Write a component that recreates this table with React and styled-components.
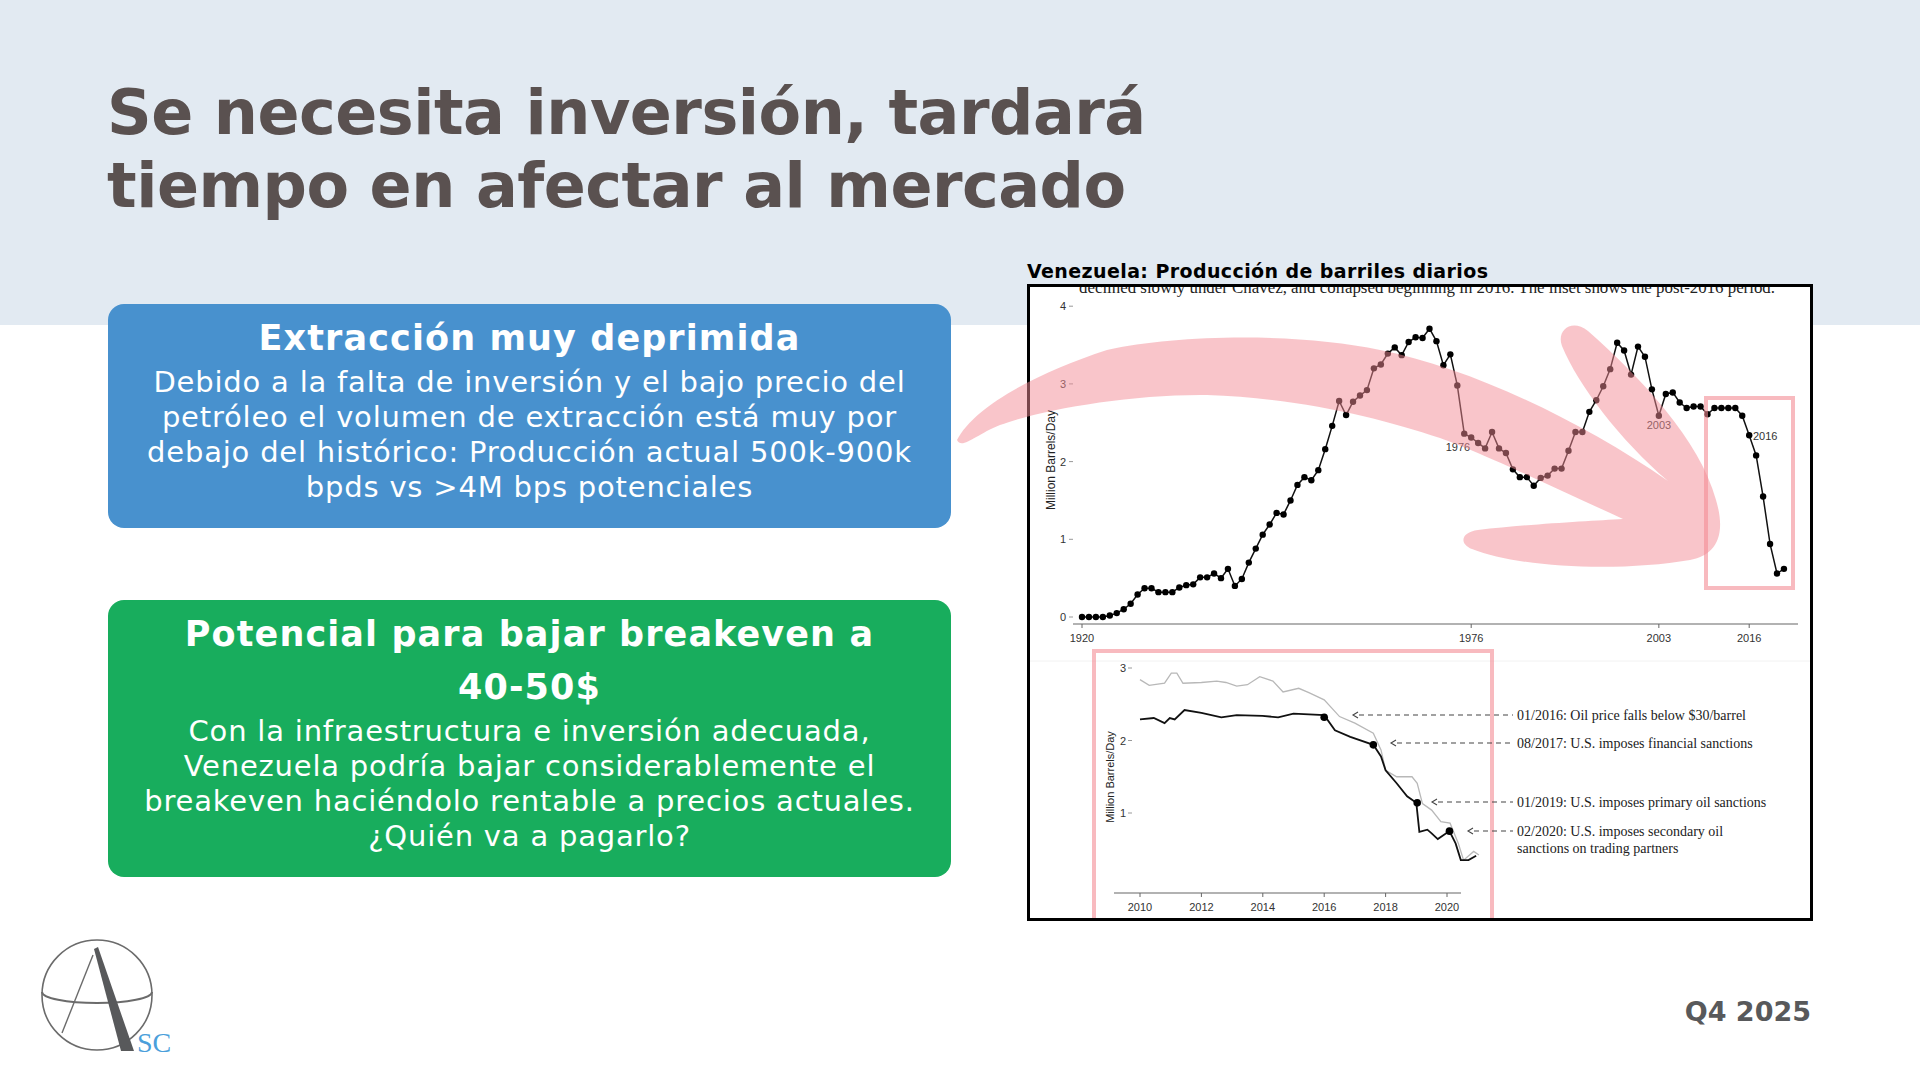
import React from 'react';
import styled, {createGlobalStyle} from 'styled-components';

const GlobalStyle = createGlobalStyle`
  html, body { margin: 0; padding: 0; background: #fff; }
  * { box-sizing: border-box; }
`;

// serie anual 1920-2021 (millones de barriles/dia)
const production = [
  0, 0, 0, 0, 0.02, 0.05, 0.1, 0.17, 0.29, 0.37,
  0.37, 0.32, 0.32, 0.32, 0.38, 0.41, 0.42, 0.51, 0.51, 0.56,
  0.5, 0.62, 0.4, 0.49, 0.7, 0.88, 1.06, 1.19, 1.34, 1.32,
  1.5, 1.7, 1.8, 1.76, 1.89, 2.16, 2.46, 2.78, 2.6, 2.77,
  2.85, 2.92, 3.2, 3.25, 3.39, 3.47, 3.37, 3.54, 3.6, 3.59,
  3.71, 3.55, 3.24, 3.38, 2.98, 2.36, 2.31, 2.24, 2.17, 2.38,
  2.17, 2.11, 1.9, 1.8, 1.8, 1.69, 1.79, 1.82, 1.91, 1.91,
  2.14, 2.38, 2.38, 2.64, 2.79, 2.97, 3.19, 3.53, 3.43, 3.12,
  3.48, 3.35, 2.93, 2.59, 2.87, 2.89, 2.76, 2.69, 2.71, 2.71,
  2.61, 2.69, 2.69, 2.69, 2.69, 2.59, 2.34, 2.08, 1.55, 0.94,
  0.56, 0.62,
];

const insetGray = [
  [2010, 2.84], [2010.3, 2.76], [2010.8, 2.79], [2011.02, 2.93], [2011.2, 2.93],
  [2011.4, 2.79], [2012, 2.8], [2012.5, 2.82], [2012.8, 2.8], [2013.15, 2.75],
  [2013.5, 2.77], [2013.9, 2.88], [2014.33, 2.82], [2014.66, 2.67], [2015.17, 2.72],
  [2015.5, 2.66], [2016, 2.56], [2016.5, 2.33], [2017, 2.24], [2017.6, 2.1],
  [2017.85, 1.87], [2018, 1.59], [2018.36, 1.5], [2018.86, 1.5], [2019.03, 1.41],
  [2019.2, 1.13], [2019.5, 1.04], [2019.8, 0.88], [2020.1, 0.86], [2020.37, 0.58],
  [2020.54, 0.35], [2020.87, 0.47], [2021.04, 0.42],
];

const insetBlack = [
  [2010, 2.29], [2010.45, 2.31], [2010.8, 2.24], [2010.97, 2.31], [2011.13, 2.29],
  [2011.45, 2.42], [2012, 2.38], [2012.65, 2.32], [2013.15, 2.35], [2013.99, 2.34],
  [2014.5, 2.32], [2015, 2.37], [2016, 2.35], [2016.35, 2.14], [2016.85, 2.05],
  [2017.6, 1.94], [2017.85, 1.78], [2018, 1.59], [2018.36, 1.41], [2018.7, 1.23],
  [2019, 1.14], [2019.1, 0.74], [2019.36, 0.77], [2019.5, 0.72], [2019.7, 0.64],
  [2020.08, 0.75], [2020.28, 0.58], [2020.45, 0.35], [2020.7, 0.35], [2020.95, 0.41],
];

const insetDots = [[2016, 2.32], [2017.6, 1.94], [2019.03, 1.14], [2020.08, 0.75]];

const notes = [
  {y: 431, from: 326, lines: ['01/2016: Oil price falls below $30/barrel']},
  {y: 459, from: 364, lines: ['08/2017: U.S. imposes financial sanctions']},
  {y: 518, from: 405, lines: ['01/2019: U.S. imposes primary oil sanctions']},
  {y: 547, from: 441, lines: ['02/2020: U.S. imposes secondary oil', 'sanctions on trading partners']},
];

const mx = year => 55 + (year - 1920) * 6.95;
const my = v => 333 - v * 77.7;
const ix = year => 113 + (year - 2010) * 30.7;
const iy = v => 384 + (3 - v) * 72.5;

const Page = styled.div`
  position: relative;
  width: 1920px;
  height: 1080px;
  overflow: hidden;
  background: linear-gradient(to bottom, #e2eaf2 0, #e2eaf2 325px, #ffffff 325px);
  font-family: "DejaVu Sans", "Open Sans", sans-serif;
`;

const Title = styled.h1`
  margin: 0;
  padding: 76px 0 0 107px;
  font-size: 62px;
  line-height: 73px;
  font-weight: 700;
  color: #5a5150;
  letter-spacing: -0.5px;
`;

const MainRow = styled.div`
  display: grid;
  grid-template-columns: 843px 786px;
  column-gap: 76px;
  margin-top: 36px;
  padding-left: 108px;
`;

const Cards = styled.div`
  display: flex;
  flex-direction: column;
  gap: 72px;
  padding-top: 46px;
`;

const Card = styled.section`
  background: ${p => p.$tone};
  border-radius: 16px;
  padding: 8px 10px 23px;
  color: #fff;
  text-align: center;
`;

const CardTitle = styled.h2`
  margin: 0;
  font-size: 35px;
  line-height: 53px;
  font-weight: 700;
  letter-spacing: 1.1px;
  white-space: nowrap;
`;

const CardBody = styled.p`
  margin: 0;
  font-size: 29px;
  line-height: 35px;
  letter-spacing: 0.8px;
  white-space: nowrap;
`;

const ChartColumn = styled.div`
  display: flex;
  flex-direction: column;
`;

const ChartTitle = styled.h3`
  margin: 0;
  font-size: 19px;
  line-height: 26px;
  font-weight: 700;
  letter-spacing: 0.4px;
  color: #000;
`;

const ChartFrame = styled.div`
  width: 786px;
  height: 637px;
  border: 3px solid #000;
  background: #fff;
  overflow: hidden;
  svg { display: block; }
`;

const Footer = styled.footer`
  display: flex;
  justify-content: space-between;
  align-items: flex-start;
  margin-top: 16px;
  padding: 0 109px 0 40px;
`;

const Period = styled.div`
  padding-top: 60px;
  font-size: 27px;
  line-height: 30px;
  font-weight: 700;
  color: #58595b;
`;

const Overlay = styled.svg`
  position: absolute;
  left: 0;
  top: 0;
  pointer-events: none;
`;

function Logo() {
  return (
    <svg width="150" height="120" viewBox="0 0 150 120">
      <circle cx="57" cy="58" r="55" fill="none" stroke="#6b6b6b" strokeWidth="1.6" />
      <path d="M2 55 A55 11 0 0 0 112 55" fill="none" stroke="#6b6b6b" strokeWidth="2" />
      <line x1="53" y1="18" x2="22" y2="96" stroke="#6b6b6b" strokeWidth="1.4" />
      <polygon points="54,12 58,10 94,114 81,114" fill="#58595b" />
      <text x="97" y="115" fontFamily="'Liberation Serif', serif" fontSize="28" fill="#4b9fdb">SC</text>
    </svg>
  );
}

function MainChart() {
  const pts = production.map((v, i) => `${mx(1920 + i)},${my(v)}`).join(' ');
  return (
    <g>
      <text x="52" y="9" fontFamily="'Liberation Serif', serif" fontSize="17" fill="#222"
        textLength="696" lengthAdjust="spacingAndGlyphs">
        declined slowly under Chávez, and collapsed beginning in 2016. The inset shows the post-2016 period.
      </text>
      <g fontFamily="'Liberation Sans', sans-serif" fontSize="11" fill="#333">
        {[0, 1, 2, 3, 4].map(v => (
          <g key={v}>
            <text x="39" y={my(v) + 4} textAnchor="end">{v}</text>
            <line x1="42" x2="46" y1={my(v)} y2={my(v)} stroke="#999" strokeWidth="1" />
          </g>
        ))}
        <text transform="translate(28 176) rotate(-90)" textAnchor="middle" fontSize="12" fill="#222">
          Million Barrels/Day
        </text>
        <line x1="46" x2="771" y1="340" y2="340" stroke="#666" strokeWidth="1.2" />
        {[1920, 1976, 2003, 2016].map(y => (
          <g key={y}>
            <line x1={mx(y)} x2={mx(y)} y1="340" y2="344" stroke="#666" />
            <text x={mx(y)} y="358" textAnchor="middle">{y}</text>
          </g>
        ))}
        <text x="431" y="167" textAnchor="middle">1976</text>
        <text x="632" y="145" textAnchor="middle">2003</text>
        <text x="726" y="156">2016</text>
      </g>
      <polyline points={pts} fill="none" stroke="#111" strokeWidth="1.5" />
      {production.map((v, i) => (
        <circle key={i} cx={mx(1920 + i)} cy={my(v)} r="3.2" fill="#000" />
      ))}
      <rect x="679" y="114" width="87" height="190" fill="none" stroke="rgba(244,140,148,0.6)" strokeWidth="4" />
      <line x1="3" x2="783" y1="377" y2="377" stroke="#f2f2f2" strokeWidth="1" />
    </g>
  );
}

function InsetChart() {
  const line = arr => arr.map(([y, v]) => `${ix(y)},${iy(v)}`).join(' ');
  return (
    <g>
      <rect x="67" y="367" width="398" height="290" fill="none" stroke="rgba(244,140,148,0.6)" strokeWidth="4" />
      <g fontFamily="'Liberation Sans', sans-serif" fontSize="11" fill="#333">
        {[1, 2, 3].map(v => (
          <g key={v}>
            <text x="99" y={iy(v) + 4} textAnchor="end">{v}</text>
            <line x1="101" x2="105" y1={iy(v)} y2={iy(v)} stroke="#999" />
          </g>
        ))}
        <text transform="translate(87 493) rotate(-90)" textAnchor="middle" fontSize="11" fill="#222">
          Million Barrels/Day
        </text>
        <line x1="87" x2="434" y1="609" y2="609" stroke="#666" strokeWidth="1.2" />
        {[2010, 2012, 2014, 2016, 2018, 2020].map(y => (
          <g key={y}>
            <line x1={ix(y)} x2={ix(y)} y1="609" y2="613" stroke="#666" />
            <text x={ix(y)} y="627" textAnchor="middle">{y}</text>
          </g>
        ))}
      </g>
      <polyline points={line(insetGray)} fill="none" stroke="#b8b8b8" strokeWidth="1.3" />
      <polyline points={line(insetBlack)} fill="none" stroke="#111" strokeWidth="1.8" />
      {insetDots.map(([y, v]) => (
        <circle key={y} cx={ix(y)} cy={iy(v)} r="3.8" fill="#000" />
      ))}
      <g fontFamily="'Liberation Serif', serif" fontSize="14" fill="#222">
        {notes.map(n => (
          <g key={n.y}>
            <line x1={n.from + 6} x2="486" y1={n.y} y2={n.y} stroke="#444" strokeWidth="1.1" strokeDasharray="5 4" />
            <polyline points={`${n.from + 5},${n.y - 3} ${n.from},${n.y} ${n.from + 5},${n.y + 3}`} fill="none" stroke="#444" strokeWidth="1.1" />
            {n.lines.map((t, i) => (
              <text key={t} x="490" y={n.y + 5 + i * 17}>{t}</text>
            ))}
          </g>
        ))}
      </g>
    </g>
  );
}

function Arrow() {
  return (
    <Overlay width="1920" height="1080" viewBox="0 0 1920 1080">
      <path
        fill="rgba(243,140,150,0.5)"
        d="M957 440
           C975 405, 1040 372, 1107 350
           C1180 334, 1300 333, 1380 350
           C1470 368, 1580 420, 1668 481
           C1620 440, 1578 385, 1562 346
           C1556 330, 1572 318, 1588 331
           C1640 377, 1700 440, 1716 500
           C1728 540, 1712 556, 1690 560
           C1620 572, 1520 568, 1472 549
           C1458 543, 1462 532, 1478 530
           C1530 524, 1590 521, 1623 519
           C1560 490, 1480 452, 1440 438
           C1380 418, 1300 398, 1207 395
           C1130 394, 1040 410, 1000 425
           C975 435, 962 450, 957 440 Z"
      />
    </Overlay>
  );
}

export default function App() {
  return (
    <Page>
      <GlobalStyle />
      <Title>
        Se necesita inversión, tardará<br />
        tiempo en afectar al mercado
      </Title>
      <MainRow>
        <Cards>
          <Card $tone="#4891ce">
            <CardTitle>Extracción muy deprimida</CardTitle>
            <CardBody>
              Debido a la falta de inversión y el bajo precio del<br />
              petróleo el volumen de extracción está muy por<br />
              debajo del histórico: Producción actual 500k-900k<br />
              bpds vs &gt;4M bps potenciales
            </CardBody>
          </Card>
          <Card $tone="#18ad5d">
            <CardTitle>
              Potencial para bajar breakeven a <br />
              40-50$
            </CardTitle>
            <CardBody>
              Con la infraestructura e inversión adecuada,<br />
              Venezuela podría bajar considerablemente el<br />
              breakeven haciéndolo rentable a precios actuales.<br />
              ¿Quién va a pagarlo?
            </CardBody>
          </Card>
        </Cards>
        <ChartColumn>
          <ChartTitle>Venezuela: Producción de barriles diarios</ChartTitle>
          <ChartFrame>
            <svg width="780" height="631" viewBox="3 3 780 631">
              <MainChart />
              <InsetChart />
            </svg>
          </ChartFrame>
        </ChartColumn>
      </MainRow>
      <Footer>
        <Logo />
        <Period>Q4 2025</Period>
      </Footer>
      <Arrow />
    </Page>
  );
}
